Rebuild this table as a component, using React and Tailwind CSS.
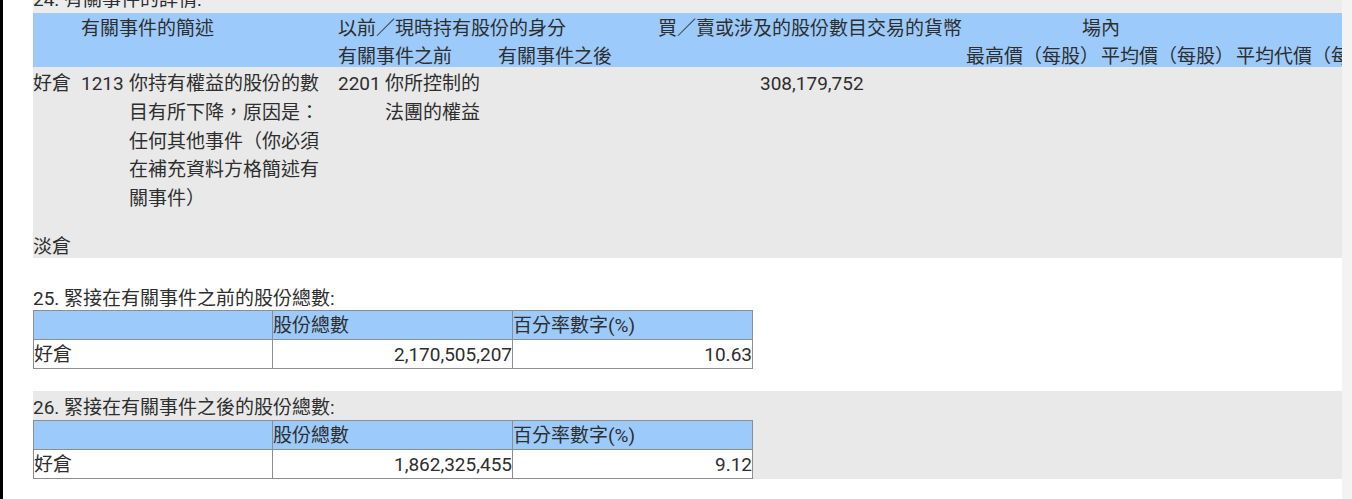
export default function App() {
  const font = { fontFamily: "Roboto, 'Noto Sans CJK TC', sans-serif" };
  return (
    <div
      className="flex h-[499px] w-[1352px] overflow-hidden bg-white text-[19px] text-[#2e2e2e]"
      style={font}
    >
      <div className="w-[3px] shrink-0 bg-black" />
      <div className="w-[30px] shrink-0 bg-white" />
      <div className="flex w-[1309px] shrink-0 flex-col overflow-hidden">
        {/* 24 title band (clipped) */}
        <div className="h-[13px] overflow-hidden bg-[#ececec]">
          <div className="-mt-[14px] whitespace-nowrap leading-[28px]">24. 有關事件的詳情:</div>
        </div>

        {/* Header */}
        <div className="bg-[#9ccbfb]">
          <div className="flex h-[28px] items-center whitespace-nowrap pt-[4px]">
            <div className="w-[305px] shrink-0 pl-[48px]">有關事件的簡述</div>
            <div className="w-[320px] shrink-0">以前／現時持有股份的身分</div>
            <div className="w-[424px] shrink-0">買／賣或涉及的股份數目交易的貨幣</div>
            <div className="shrink-0">場內</div>
          </div>
          <div className="flex h-[26px] items-center whitespace-nowrap pt-[6px]">
            <div className="w-[305px] shrink-0" />
            <div className="w-[160px] shrink-0">有關事件之前</div>
            <div className="w-[468px] shrink-0">有關事件之後</div>
            <div className="w-[135px] shrink-0">最高價（每股）</div>
            <div className="w-[135px] shrink-0">平均價（每股）</div>
            <div className="shrink-0">平均代價（每股）</div>
          </div>
        </div>

        {/* Body */}
        <div className="bg-[#e9e9e9] leading-[28.8px]">
          <div className="flex h-[165px] pt-[3px]">
            <div className="w-[48px] shrink-0">好倉</div>
            <div className="w-[48px] shrink-0">1213</div>
            <div className="w-[209px] shrink-0">
              <div className="w-[200px]">你持有權益的股份的數目有所下降，原因是：任何其他事件（你必須在補充資料方格簡述有關事件）</div>
            </div>
            <div className="w-[47px] shrink-0">2201</div>
            <div className="w-[113px] shrink-0">
              <div className="w-[100px]">你所控制的法團的權益</div>
            </div>
            <div className="w-[262px] shrink-0" />
            <div className="shrink-0">308,179,752</div>
          </div>
          <div className="h-[26px] pt-[2px] leading-[26px]">淡倉</div>
        </div>

        {/* 25 */}
        <div className="h-[26px] shrink-0" />
        <div className="h-[26px] whitespace-nowrap pt-[2px] leading-[26px]">25. 緊接在有關事件之前的股份總數:</div>
        <SharesTable total="2,170,505,207" pct="10.63" />
        <div className="h-[22px] shrink-0" />

        {/* 26 */}
        <div className="bg-[#e9e9e9]">
          <div className="h-[29px] whitespace-nowrap pt-[2px] leading-[29px]">26. 緊接在有關事件之後的股份總數:</div>
          <SharesTable total="1,862,325,455" pct="9.12" />
        </div>
      </div>
      <div className="w-[10px] shrink-0 bg-[#f3f3f3]" />
    </div>
  );
}

function SharesTable({ total, pct }) {
  return (
    <div className="w-[720px] border-l border-t border-[#8e8e8e] leading-[30px]">
      <div className="flex bg-[#9ccbfb]">
        <div className="h-[29px] w-[239px] border-b border-r border-[#8e8e8e]" />
        <div className="h-[29px] w-[240px] border-b border-r border-[#8e8e8e]">股份總數</div>
        <div className="h-[29px] w-[240px] border-b border-r border-[#8e8e8e]">百分率數字(%)</div>
      </div>
      <div className="flex bg-white">
        <div className="h-[29px] w-[239px] border-b border-r border-[#8e8e8e]">好倉</div>
        <div className="h-[29px] w-[240px] border-b border-r border-[#8e8e8e] text-right">{total}</div>
        <div className="h-[29px] w-[240px] border-b border-r border-[#8e8e8e] text-right">{pct}</div>
      </div>
    </div>
  );
}
